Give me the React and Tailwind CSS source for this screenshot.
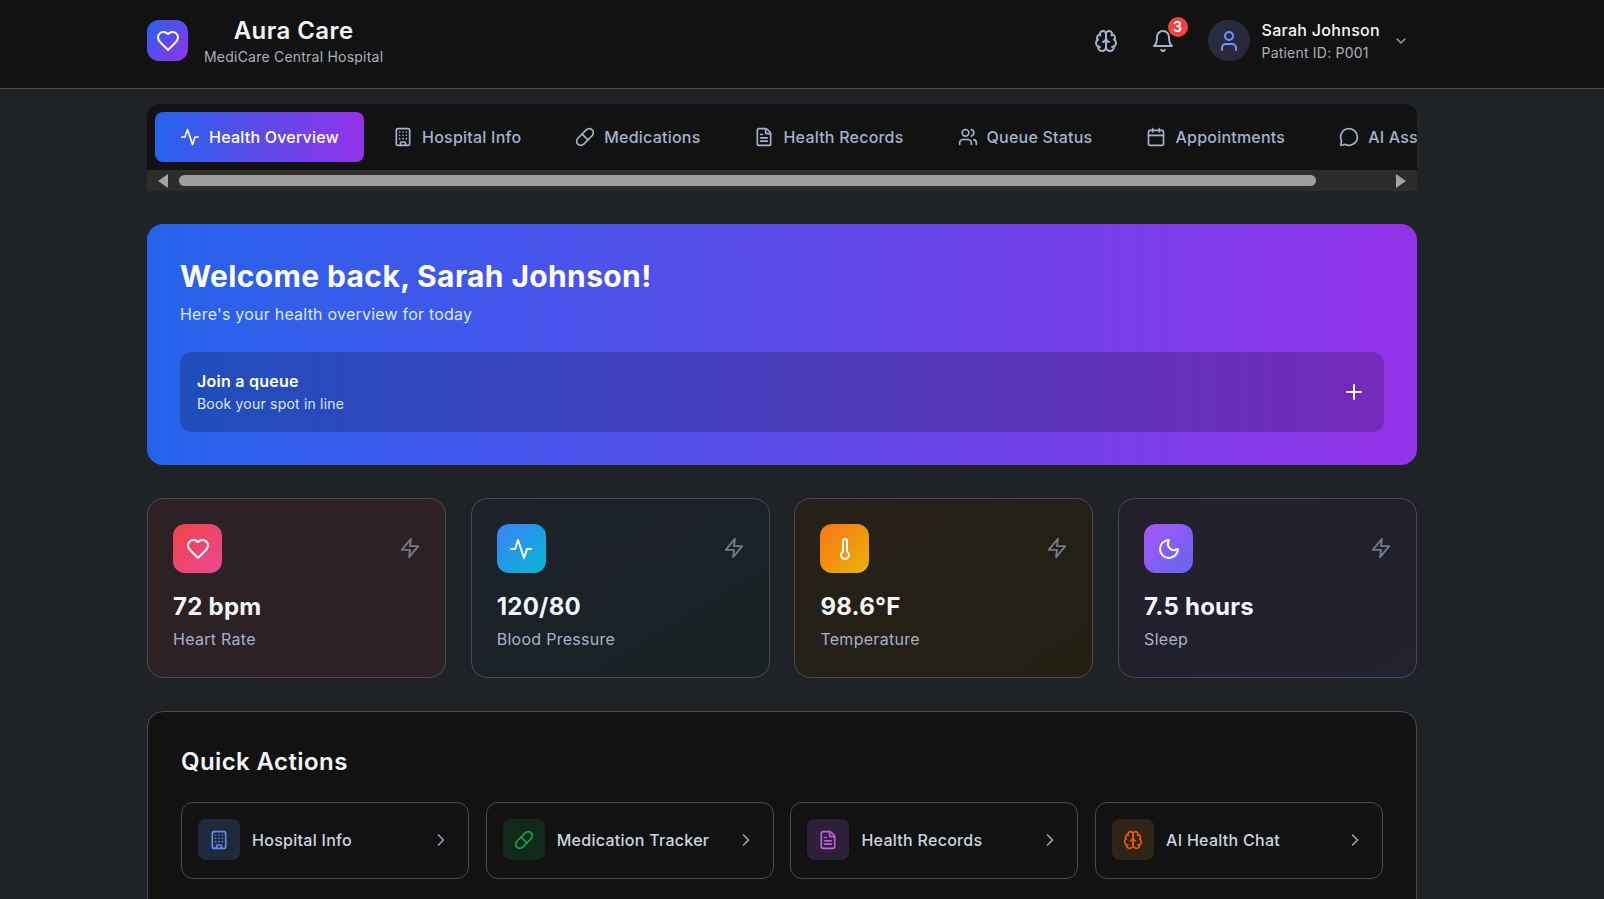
import {
  Building,
  Calendar,
  ChevronDown,
  ChevronRight,
  FileText,
  MessageCircle,
  Moon,
  Pill,
  Plus,
  Thermometer,
  User,
  Users,
} from "lucide-react";

// older sharp-cornered lucide shapes, the ones in the package now are drawn differently
const strokeProps = {
  viewBox: "0 0 24 24",
  fill: "none",
  stroke: "currentColor",
  strokeWidth: 2,
  strokeLinecap: "round",
  strokeLinejoin: "round",
};

const Heart = ({ className }) => (
  <svg className={className} {...strokeProps}>
    <path d="M19 14c1.49-1.46 3-3.21 3-5.5A5.5 5.5 0 0 0 16.5 3c-1.76 0-3 .5-4.5 2-1.5-1.5-2.74-2-4.5-2A5.5 5.5 0 0 0 2 8.5c0 2.3 1.5 4.05 3 5.5l7 7Z" />
  </svg>
);

const Activity = ({ className }) => (
  <svg className={className} {...strokeProps}>
    <path d="M22 12h-4l-3 9L9 3l-3 9H2" />
  </svg>
);

const Zap = ({ className }) => (
  <svg className={className} {...strokeProps}>
    <path d="M13 2 3 14h9l-1 8 10-12h-9l1-8Z" />
  </svg>
);

const Bell = ({ className }) => (
  <svg className={className} {...strokeProps}>
    <path d="M6 8a6 6 0 0 1 12 0c0 7 3 9 3 9H3s3-2 3-9" />
    <path d="M10.3 21a1.94 1.94 0 0 0 3.4 0" />
  </svg>
);

const Brain = ({ className }) => (
  <svg className={className} {...strokeProps}>
    <path d="M12 5a3 3 0 1 0-5.997.125 4 4 0 0 0-2.526 5.77 4 4 0 0 0 .556 6.588A4 4 0 1 0 12 18Z" />
    <path d="M12 5a3 3 0 1 1 5.997.125 4 4 0 0 1 2.526 5.77 4 4 0 0 1-.556 6.588A4 4 0 1 1 12 18Z" />
    <path d="M15 13a4.5 4.5 0 0 1-3-4 4.5 4.5 0 0 1-3 4" />
    <path d="M17.599 6.5a3 3 0 0 0 .399-1.375" />
    <path d="M6.003 5.125A3 3 0 0 0 6.401 6.5" />
    <path d="M3.477 10.896a4 4 0 0 1 .585-.396" />
    <path d="M19.938 10.5a4 4 0 0 1 .585.396" />
    <path d="M6 18a4 4 0 0 1-1.967-.516" />
    <path d="M19.967 17.484A4 4 0 0 1 18 18" />
  </svg>
);

const tabs = [
  { label: "Hospital Info", icon: Building },
  { label: "Medications", icon: Pill },
  { label: "Health Records", icon: FileText },
  { label: "Queue Status", icon: Users },
  { label: "Appointments", icon: Calendar },
  { label: "AI Assistant", icon: MessageCircle },
];

const vitals = [
  {
    value: "72 bpm",
    label: "Heart Rate",
    icon: Heart,
    card: "from-[#2c2124] to-[#2d2125]",
    badge: "from-[#ef4444] to-[#ec4899]",
  },
  {
    value: "120/80",
    label: "Blood Pressure",
    icon: Activity,
    card: "from-[#1d222b] to-[#182123]",
    badge: "from-[#3b82f6] to-[#06b6d4]",
  },
  {
    value: "98.6°F",
    label: "Temperature",
    icon: Thermometer,
    card: "from-[#272119] to-[#221f13]",
    badge: "from-[#f97316] to-[#eab308]",
  },
  {
    value: "7.5 hours",
    label: "Sleep",
    icon: Moon,
    card: "from-[#241f2c] to-[#22212e]",
    badge: "from-[#a855f7] to-[#6366f1]",
  },
];

const actions = [
  { label: "Hospital Info", icon: Building, badge: "bg-[#1e293b]", color: "text-[#608cf5]" },
  { label: "Medication Tracker", icon: Pill, badge: "bg-[#11291b]", color: "text-[#16a34a]" },
  { label: "Health Records", icon: FileText, badge: "bg-[#2c2137]", color: "text-[#c65ce8]" },
  { label: "AI Health Chat", icon: Brain, badge: "bg-[#2f2516]", color: "text-[#ea580c]" },
];

export default function App() {
  return (
    <div className="h-screen overflow-hidden bg-[#1f2328] font-['Inter',sans-serif] text-white">
      {/* Header */}
      <header className="h-[89px] border-b border-[#4a4a4a] bg-[#121212]">
        <div className="ml-[147px] flex h-[81px] w-[1270px] items-center justify-between pr-2">
          <div className="flex items-center gap-4">
            <div className="flex h-[41px] w-[41px] items-center justify-center rounded-xl bg-linear-to-br/srgb from-[#2563eb] to-[#9333ea]">
              <Heart className="h-6 w-6" />
            </div>
            <div className="text-center">
              <div className="text-2xl leading-8 font-semibold tracking-[0.45px] text-[#f1f5f9]">Aura Care</div>
              <div className="text-sm leading-5 tracking-[0.22px] text-[#a8b0bc]">MediCare Central Hospital</div>
            </div>
          </div>
          <div className="flex items-center">
            <Brain className="h-6 w-6 text-[#a3b3cc]" />
            <div className="relative ml-[33px] h-6 w-6">
              <Bell className="h-6 w-6 text-[#a3b3cc]" />
              <span className="absolute -top-[12px] -right-[13px] flex h-5 w-5 items-center justify-center rounded-full bg-[#ef4444] text-sm font-semibold">
                3
              </span>
            </div>
            <div className="ml-[33px] flex h-[41px] w-[42px] items-center justify-center rounded-full bg-linear-to-br/srgb from-[#233044] to-[#2e2438]">
              <User className="h-6 w-6 text-[#6f94f5]" />
            </div>
            <div className="ml-3">
              <div className="-mt-px mb-px text-base leading-6 font-medium tracking-[0.3px] text-[#f1f5f9]">
                Sarah Johnson
              </div>
              <div className="text-sm leading-5 tracking-[0.2px] text-[#a8b0bc]">Patient ID: P001</div>
            </div>
            <ChevronDown className="ml-[13px] h-4 w-4 text-[#94a3b8]" />
          </div>
        </div>
      </header>

      <main className="ml-[147px] w-[1270px] pt-[15px]">
        {/* Tabs */}
        <nav className="overflow-hidden rounded-t-xl bg-[#121212]">
          <div className="flex h-[66px] items-center gap-1 overflow-hidden whitespace-nowrap pl-2">
            <button className="flex h-[50px] shrink-0 items-center gap-[9px] rounded-lg bg-linear-to-r/srgb from-[#2563eb] to-[#9333ea] px-[25px] text-base font-medium tracking-[0.22px]">
              <Activity className="h-5 w-5" />
              Health Overview
            </button>
            {tabs.map((tab) => (
              <button
                key={tab.label}
                className="flex h-[50px] shrink-0 items-center gap-[9px] px-[25px] text-base font-medium tracking-[0.22px] text-[#a3b3cc]"
              >
                <tab.icon className="h-5 w-5" />
                {tab.label}
              </button>
            ))}
          </div>
          {/* Scrollbar */}
          <div className="flex h-[21px] items-center bg-[#2c2c2c] px-[11px]">
            <span className="h-0 w-0 border-y-[7px] border-r-[10px] border-y-transparent border-r-[#a3a3a3]" />
            <span className="ml-[11px] h-[11px] w-[1137px] rounded-full bg-[#9f9f9f]" />
            <span className="ml-auto h-0 w-0 border-y-[7px] border-l-[10px] border-y-transparent border-l-[#a3a3a3]" />
          </div>
        </nav>

        {/* Welcome banner */}
        <section className="mt-[33px] h-[241px] rounded-2xl bg-linear-to-r/srgb from-[#2563eb] to-[#9333ea] p-[33px]">
          <h1 className="text-3xl leading-[38px] font-bold tracking-[0.37px]">Welcome back, Sarah Johnson!</h1>
          <p className="mt-[7px] text-base leading-6 tracking-[0.22px] text-[#dbeafe]">
            Here's your health overview for today
          </p>
          <div className="mt-[26px] flex h-20 items-center justify-between rounded-xl bg-black/20 pr-[18px] pl-[17px]">
            <div>
              <div className="-mt-px mb-px text-base leading-6 font-semibold tracking-[0.25px]">Join a queue</div>
              <div className="text-sm leading-5 tracking-[0.2px] text-[#dbeafe]">Book your spot in line</div>
            </div>
            <Plus className="h-6 w-6" />
          </div>
        </section>

        {/* Vitals */}
        <section className="mt-[33px] grid grid-cols-4 gap-[24.8px]">
          {vitals.map((vital) => (
            <div
              key={vital.label}
              className={`h-[180px] rounded-2xl border border-[#4a4a4a] bg-linear-to-br/srgb p-[25px] ${vital.card}`}
            >
              <div className="flex items-center justify-between">
                <div
                  className={`flex h-[49px] w-[49px] items-center justify-center rounded-xl bg-linear-to-br/srgb ${vital.badge}`}
                >
                  <vital.icon className="h-6 w-6" />
                </div>
                <Zap className="-mr-px mb-[2px] h-[22px] w-[22px] text-[#727b8a]" />
              </div>
              <div className="mt-[18px] text-2xl leading-8 font-bold tracking-[0.25px] text-[#f1f5f9]">
                {vital.value}
              </div>
              <div className="mt-1 text-base leading-6 tracking-[0.28px] text-[#a3b3cc]">{vital.label}</div>
            </div>
          ))}
        </section>

        {/* Quick actions */}
        <section className="mt-[33px] h-[300px] rounded-2xl border border-[#4a4a4a] bg-[#121212] px-[33px] pt-[34px]">
          <h2 className="text-2xl leading-8 font-semibold tracking-[0.4px] text-[#f1f5f9]">Quick Actions</h2>
          <div className="mt-6 grid grid-cols-4 gap-[16.8px]">
            {actions.map((action) => (
              <div
                key={action.label}
                className="flex h-[77px] items-center rounded-xl border border-[#4a4a4a] pr-[17px] pb-[2px] pl-4"
              >
                <div className={`flex h-[41px] w-[42px] items-center justify-center rounded-lg ${action.badge}`}>
                  <action.icon className={`h-5 w-5 ${action.color}`} />
                </div>
                <span className="ml-3 text-base font-medium tracking-[0.28px] text-[#cbd5e1]">{action.label}</span>
                <ChevronRight className="ml-auto h-5 w-5 text-[#94a3b8]" />
              </div>
            ))}
          </div>
        </section>
      </main>
    </div>
  );
}
